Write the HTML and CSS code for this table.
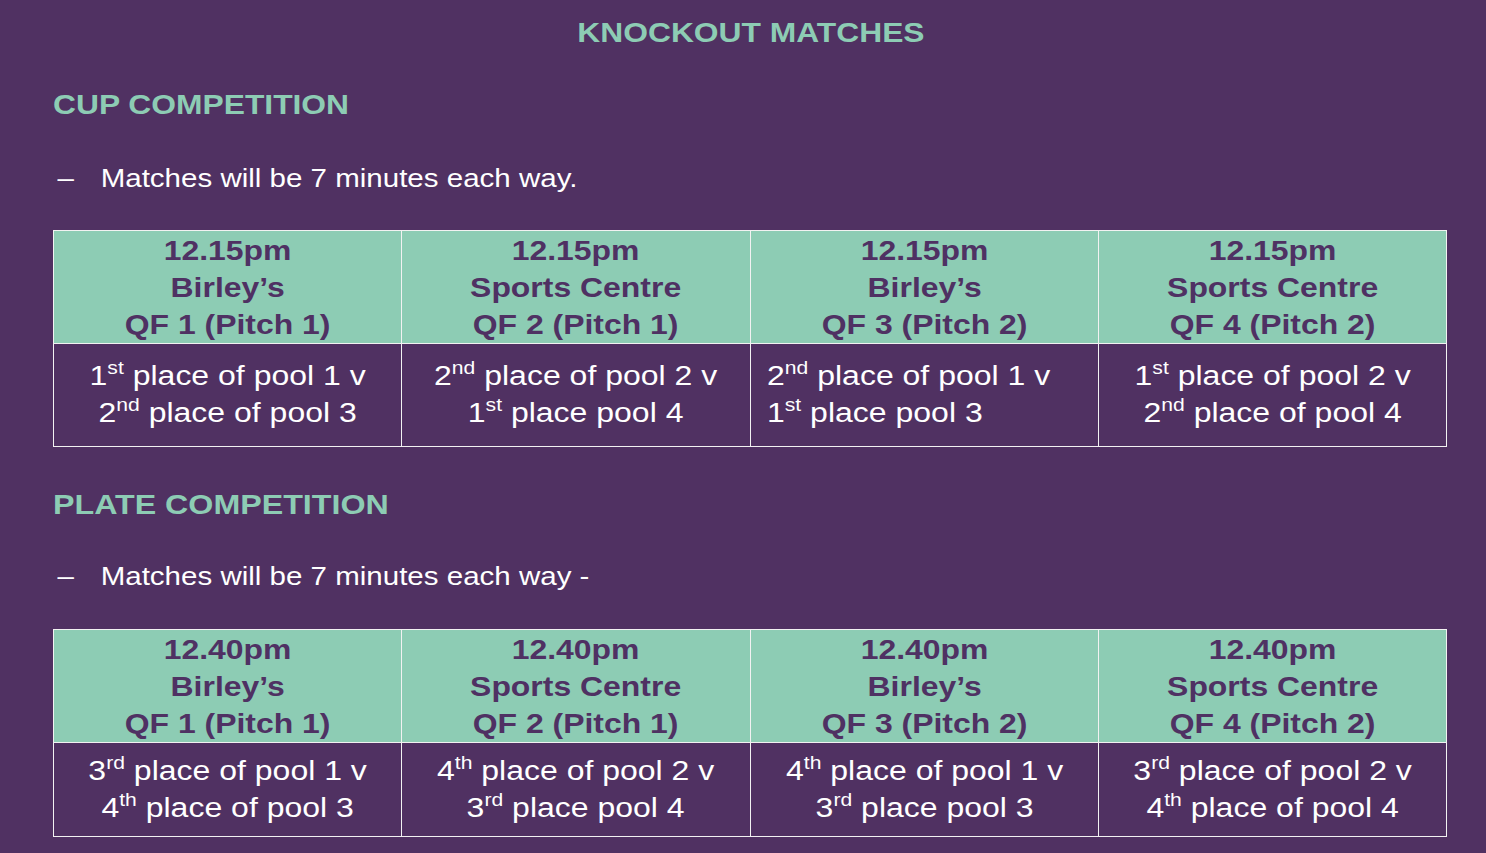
FILE: index.html
```html
<!DOCTYPE html>
<html lang="en">
<head>
<meta charset="utf-8">
<title>Knockout Matches</title>
<link rel="stylesheet" href="styles.css">
</head>
<body>
<main class="page">
  <h1 class="title"><span class="sx">KNOCKOUT MATCHES</span></h1>

  <h2 class="section section-cup"><span class="sx">CUP COMPETITION</span></h2>
  <p class="bullet"><span class="sx bullet-inner"><span class="dash">–</span><span>Matches will be 7 minutes each way.</span></span></p>

  <table class="fixtures fixtures-cup">
    <tr class="head">
      <td><div class="sx">12.15pm<br>Birley’s<br>QF 1 (Pitch 1)</div></td>
      <td><div class="sx">12.15pm<br>Sports Centre<br>QF 2 (Pitch 1)</div></td>
      <td><div class="sx">12.15pm<br>Birley’s<br>QF 3 (Pitch 2)</div></td>
      <td><div class="sx">12.15pm<br>Sports Centre<br>QF 4 (Pitch 2)</div></td>
    </tr>
    <tr class="body">
      <td><div class="sx">1<sup>st</sup> place of pool 1 v<br>2<sup>nd</sup> place of pool 3</div></td>
      <td><div class="sx">2<sup>nd</sup> place of pool 2 v<br>1<sup>st</sup> place pool 4</div></td>
      <td class="left"><div class="sx">2<sup>nd</sup> place of pool 1 v<br>1<sup>st</sup> place pool 3</div></td>
      <td><div class="sx">1<sup>st</sup> place of pool 2 v<br>2<sup>nd</sup> place of pool 4</div></td>
    </tr>
  </table>

  <h2 class="section section-plate"><span class="sx">PLATE COMPETITION</span></h2>
  <p class="bullet bullet-plate"><span class="sx bullet-inner"><span class="dash">–</span><span>Matches will be 7 minutes each way -</span></span></p>

  <table class="fixtures fixtures-plate">
    <tr class="head">
      <td><div class="sx">12.40pm<br>Birley’s<br>QF 1 (Pitch 1)</div></td>
      <td><div class="sx">12.40pm<br>Sports Centre<br>QF 2 (Pitch 1)</div></td>
      <td><div class="sx">12.40pm<br>Birley’s<br>QF 3 (Pitch 2)</div></td>
      <td><div class="sx">12.40pm<br>Sports Centre<br>QF 4 (Pitch 2)</div></td>
    </tr>
    <tr class="body">
      <td><div class="sx">3<sup>rd</sup> place of pool 1 v<br>4<sup>th</sup> place of pool 3</div></td>
      <td><div class="sx">4<sup>th</sup> place of pool 2 v<br>3<sup>rd</sup> place pool 4</div></td>
      <td><div class="sx">4<sup>th</sup> place of pool 1 v<br>3<sup>rd</sup> place pool 3</div></td>
      <td><div class="sx">3<sup>rd</sup> place of pool 2 v<br>4<sup>th</sup> place of pool 4</div></td>
    </tr>
  </table>
</main>
</body>
</html>
```

FILE: styles.css
```css
html, body {
  margin: 0;
  padding: 0;
  background: #503162;
}

body {
  width: 1486px;
  height: 853px;
  overflow: hidden;
  font-family: "Liberation Sans", Arial, sans-serif;
  color: #ffffff;
}

.page {
  padding: 16px 0 0 53px;
  width: 1395px;
}

.sx {
  display: inline-block;
  transform: scaleX(1.135);
  transform-origin: left center;
}

.title {
  margin: 0;
  text-align: center;
  font-size: 28px;
  line-height: 34px;
  font-weight: bold;
  color: #8dccb4;
}

.title .sx {
  transform-origin: center center;
}

.section {
  margin: 0;
  font-size: 28px;
  line-height: 34px;
  font-weight: bold;
  color: #8dccb4;
}

.section-cup {
  margin-top: 38px;
}

.section-plate {
  margin-top: 41px;
}

.section-plate .sx {
  transform: scaleX(1.15);
}

.bullet {
  margin: 39px 0 0 0;
  font-size: 26px;
  line-height: 34px;
}

.bullet-plate {
  margin-top: 37px;
}

.bullet-inner {
  display: inline-flex;
}

.dash {
  width: 42px;
  padding-left: 4px;
  box-sizing: border-box;
}

.fixtures {
  width: 1394px;
  border-collapse: collapse;
  table-layout: fixed;
  margin-top: 35px;
}

.fixtures-plate {
  margin-top: 36px;
}

.fixtures td {
  border: 1px solid #f2f2f2;
  text-align: center;
  vertical-align: middle;
  padding: 0;
}

.fixtures .sx {
  display: block;
  transform-origin: center center;
}

.head td {
  background: #8dccb4;
  color: #4f3163;
  font-size: 28px;
  font-weight: bold;
  line-height: 37px;
  padding: 1px 0 0 0;
  height: 110px;
}

.head .sx {
  transform: scaleX(1.14);
}

.body td {
  font-size: 27px;
  line-height: 37px;
}

.body .sx {
  transform: scaleX(1.185);
}

.fixtures-cup .body td {
  height: 102px;
}

.fixtures-plate .body td {
  height: 93px;
}

.fixtures td.left {
  text-align: left;
  padding-left: 16px;
}

.fixtures td.left .sx {
  transform-origin: left center;
}

sup {
  font-size: 0.66em;
  line-height: 0;
  vertical-align: 0.6em;
}
```
